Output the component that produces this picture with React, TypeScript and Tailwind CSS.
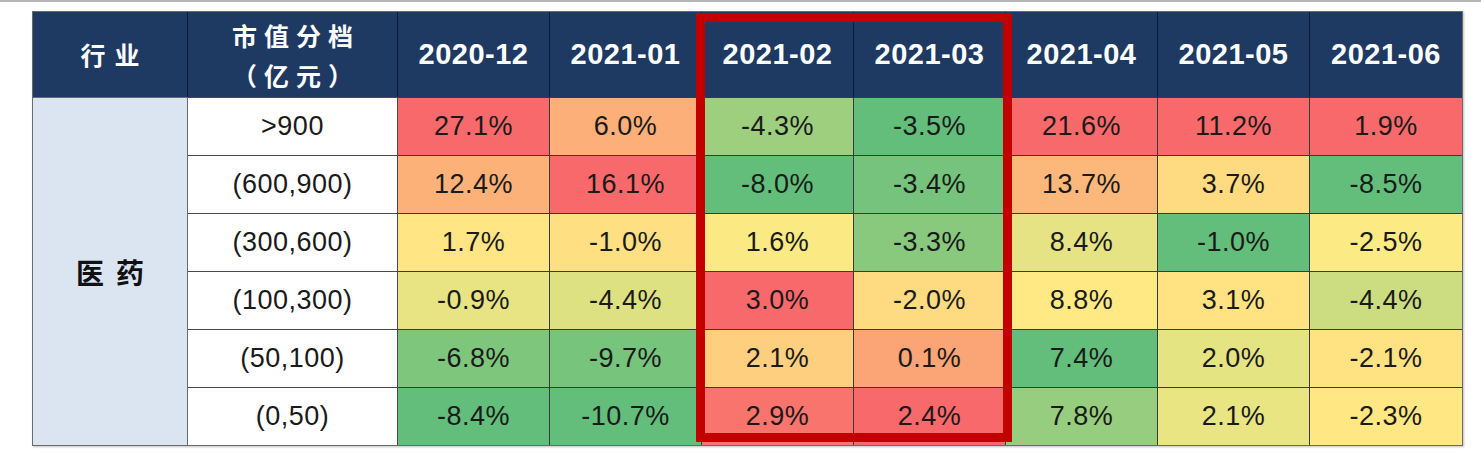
import React from "react";

const months = ["2020-12", "2021-01", "2021-02", "2021-03", "2021-04", "2021-05", "2021-06"];
const buckets = [">900", "(600,900)", "(300,600)", "(100,300)", "(50,100)", "(0,50)"];
const cols: number[][] = [
  [27.1, 12.4, 1.7, -0.9, -6.8, -8.4],
  [6.0, 16.1, -1.0, -4.4, -9.7, -10.7],
  [-4.3, -8.0, 1.6, 3.0, 2.1, 2.9],
  [-3.5, -3.4, -3.3, -2.0, 0.1, 2.4],
  [21.6, 13.7, 8.4, 8.8, 7.4, 7.8],
  [11.2, 3.7, -1.0, 3.1, 2.0, 2.1],
  [1.9, -8.5, -2.5, -4.4, -2.1, -2.3],
];

const GREEN = [0x63, 0xbe, 0x7b];
const YELLOW = [0xff, 0xeb, 0x84];
const RED = [0xf8, 0x69, 0x6b];

function mix(a: number[], b: number[], t: number) {
  const c = a.map((x, i) => Math.round(x + (b[i] - x) * t));
  return `rgb(${c[0]},${c[1]},${c[2]})`;
}

function scaleColor(v: number, col: number[]) {
  const s = [...col].sort((a, b) => a - b);
  const min = s[0];
  const max = s[s.length - 1];
  const mid = (s[2] + s[3]) / 2;
  if (v >= mid) {
    const t = max === mid ? 0 : (v - mid) / (max - mid);
    return mix(YELLOW, RED, t);
  }
  const t = mid === min ? 0 : (mid - v) / (mid - min);
  return mix(YELLOW, GREEN, t);
}

export default function App() {
  return (
    <div className="w-[1481px] h-[453px] bg-white overflow-hidden">
      <div className="h-[2px] bg-[#b4b4b4]" />
      <div className="relative ml-[32px] mt-[9px] w-[1431px]">
        <div
          className="grid grid-cols-[155px_210px_repeat(7,1fr)] grid-rows-[85px_repeat(6,58px)] border border-[#6b6b6b] shadow-[1px_1px_2px_rgba(0,0,0,0.25)]"
          style={{ fontFamily: '"Liberation Sans", Arial, "Noto Sans CJK SC", sans-serif' }}
        >
          <div className="bg-[#1f3a62] border-r border-[#0e1a2e] flex items-center justify-center text-white text-[25px] font-bold tracking-[9px] pl-[9px]" style={{ fontFamily: '"Noto Sans CJK SC", sans-serif' }}>
            行业
          </div>
          <div className="bg-[#1f3a62] border-r border-[#0e1a2e] flex flex-col items-center justify-center text-white text-[25px] font-bold leading-[40px] tracking-[7px] pl-[7px]" style={{ fontFamily: '"Noto Sans CJK SC", sans-serif' }}>
            <span>市值分档</span>
            <span>（亿元）</span>
          </div>
          {months.map((m, i) => (
            <div
              key={m}
              className={`bg-[#1f3a62] flex items-center justify-center text-white text-[29px] font-bold tracking-[0.5px] ${i < 6 ? "border-r border-[#0e1a2e]" : ""}`}
            >
              {m}
            </div>
          ))}
          <div className="row-span-6 bg-[#dbe5f1] border-r border-t border-[#6b6b6b] flex items-center justify-center text-[#111] text-[28px] font-bold tracking-[12px] pl-[12px]" style={{ fontFamily: '"Noto Sans CJK SC", sans-serif' }}>
            医药
          </div>
          {buckets.map((b, r) => (
            <React.Fragment key={b}>
              <div className="bg-white border-r border-t border-[#4a4a4a] flex items-center justify-center text-[#1a1a1a] text-[27px] tracking-[0.5px]">
                {b}
              </div>
              {cols.map((col, c) => (
                <div
                  key={c}
                  className={`border-t border-[#3a3a3a] flex items-center justify-center text-[#1a1a1a] text-[27px] tracking-[0.5px] ${c < 6 ? "border-r" : ""}`}
                  style={{ backgroundColor: scaleColor(col[r], col) }}
                >
                  {col[r].toFixed(1)}%
                </div>
              ))}
            </React.Fragment>
          ))}
        </div>
        <div className="absolute left-[664px] top-[2px] w-[316px] h-[429px] border-[9px] border-[#c20000] pointer-events-none" />
      </div>
    </div>
  );
}
